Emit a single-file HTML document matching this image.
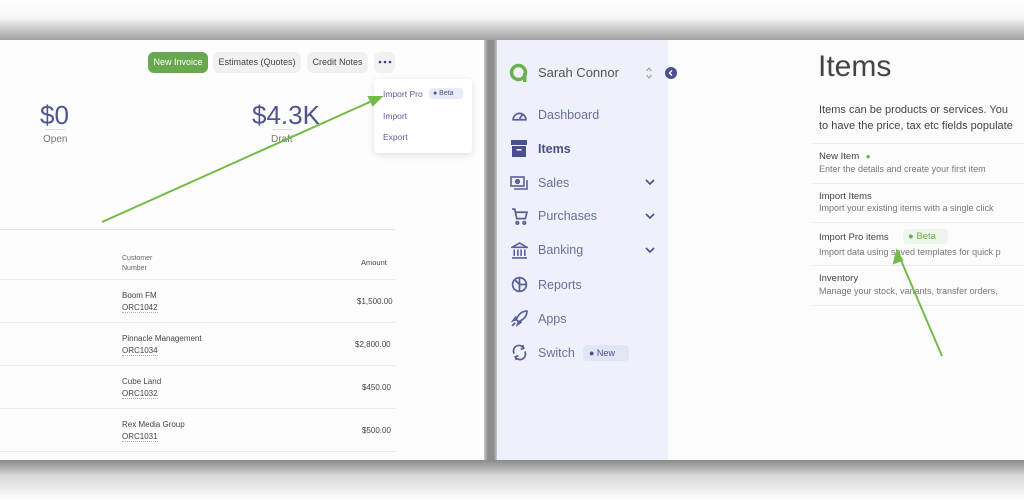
<!DOCTYPE html>
<html><head><meta charset="utf-8"><style>
*{box-sizing:border-box;margin:0;padding:0}
body{width:1024px;height:500px;overflow:hidden;background:#fff;font-family:"Liberation Sans",sans-serif;position:relative}
.a{position:absolute;white-space:nowrap}
.shadowtop{position:absolute;left:0;top:0;width:1024px;height:40px;background:linear-gradient(#fff 0,#f6f6f6 45%,#a0a0a0 100%)}
.shadowbot{position:absolute;left:0;top:460px;width:1024px;height:40px;background:linear-gradient(#8a8a8a 0,#d8d8d8 40%,#fff 100%)}
.gap{position:absolute;left:484px;top:40px;width:13px;height:420px;background:linear-gradient(90deg,#c8c8c8,#8d8d8d 30%,#8d8d8d 75%,#c8c8c8)}
.lp{position:absolute;left:0;top:40px;width:484px;height:420px;background:#fdfdfd}
.rp{position:absolute;left:497px;top:40px;width:527px;height:420px;background:#fcfcfc}
.sb{position:absolute;left:497px;top:40px;width:171px;height:420px;background:#eff1fa}
.btn{position:absolute;top:52px;height:21px;border-radius:6px;background:#f0f1f1;font-size:9px;color:#444;line-height:21px;text-align:center}
.nav{position:absolute;left:538px;font-size:12.5px;color:#6a6f9a}
.sm{font-size:8px;color:#444}
.line{position:absolute;height:1px;background:#ececec}
</style></head><body>
<div class="shadowtop"></div><div class="shadowbot"></div>
<div class="lp"></div><div class="gap"></div><div class="rp"></div><div class="sb"></div>

<!-- left panel -->
<div class="btn" style="left:148px;width:60px;background:#6aa84f;color:#fff">New Invoice</div>
<div class="btn" style="left:213px;width:88px">Estimates (Quotes)</div>
<div class="btn" style="left:307px;width:61px">Credit Notes</div>
<div class="btn" style="left:374px;width:21px"></div>
<svg class="a" style="left:378px;top:60px" width="14" height="4"><circle cx="2" cy="2" r="1.3" fill="#3e3f8a"/><circle cx="7" cy="2" r="1.3" fill="#3e3f8a"/><circle cx="12" cy="2" r="1.3" fill="#3e3f8a"/></svg>
<div class="a" style="left:374px;top:79px;width:98px;height:74px;background:#fff;border-radius:4px;box-shadow:0 2px 8px rgba(0,0,0,.12)"></div>
<div class="a" style="left:383px;top:89px;font-size:8.5px;color:#5a5e9e">Import Pro</div>
<div class="a" style="left:429px;top:88px;width:34px;height:11px;border-radius:3px;background:#e9ebf6;font-size:7px;color:#4a4e8e;line-height:11px;padding-left:4px">● Beta</div>
<div class="a" style="left:383px;top:111px;font-size:8.5px;color:#5a5e9e">Import</div>
<div class="a" style="left:383px;top:132px;font-size:8.5px;color:#5a5e9e">Export</div>
<div class="a" style="left:40px;top:100px;font-size:26px;color:#50558f">$0</div>
<div class="a" style="left:45px;top:129px;width:20px;height:1px;background:#ddd"></div>
<div class="a" style="left:43px;top:134px;font-size:10px;color:#777">Open</div>
<div class="a" style="left:252px;top:100px;font-size:26px;color:#50558f">$4.3K</div>
<div class="a" style="left:272px;top:129px;width:20px;height:1px;background:#ddd"></div>
<div class="a" style="left:271px;top:134px;font-size:10px;color:#777">Draft</div>
<div class="line" style="left:0;top:229px;width:395px;background:#e4e4e4"></div>
<div class="a sm" style="left:122px;top:254px;font-size:7px;color:#666;line-height:10px">Customer<br>Number</div>
<div class="a sm" style="left:361px;top:258px;font-size:7.5px">Amount</div>
<div class="line" style="left:0;top:279px;width:395px"></div>
<div class="a sm" style="left:122px;top:291px">Boom FM</div><div class="a sm" style="left:122px;top:303px;border-bottom:1px dotted #aaa">ORC1042</div><div class="a sm" style="left:357px;top:297px">$1,500.00</div>
<div class="line" style="left:0;top:322px;width:395px"></div>
<div class="a sm" style="left:122px;top:334px">Pinnacle Management</div><div class="a sm" style="left:122px;top:346px;border-bottom:1px dotted #aaa">ORC1034</div><div class="a sm" style="left:355px;top:340px">$2,800.00</div>
<div class="line" style="left:0;top:365px;width:395px"></div>
<div class="a sm" style="left:122px;top:377px">Cube Land</div><div class="a sm" style="left:122px;top:389px;border-bottom:1px dotted #aaa">ORC1032</div><div class="a sm" style="left:362px;top:383px">$450.00</div>
<div class="line" style="left:0;top:408px;width:395px"></div>
<div class="a sm" style="left:122px;top:420px">Rex Media Group</div><div class="a sm" style="left:122px;top:432px;border-bottom:1px dotted #aaa">ORC1031</div><div class="a sm" style="left:362px;top:426px">$500.00</div>
<div class="line" style="left:0;top:451px;width:395px"></div>

<!-- sidebar -->
<svg class="a" style="left:508px;top:62px" width="22" height="22" viewBox="0 0 22 22"><circle cx="10.5" cy="10.5" r="7" fill="none" stroke="#6ab04c" stroke-width="3.5"/><rect x="15" y="11" width="3.5" height="9" fill="#6ab04c"/></svg>
<div class="a" style="left:538px;top:65px;font-size:13px;color:#555">Sarah Connor</div>
<svg class="a" style="left:645px;top:66px" width="8" height="14" viewBox="0 0 8 14" fill="none" stroke="#999" stroke-width="1"><path d="M1.5 5l2.5-3 2.5 3M1.5 9l2.5 3 2.5-3"/></svg>
<div class="a" style="left:665px;top:67px;width:12px;height:12px;border-radius:50%;background:#4a4f8f"></div>
<svg class="a" style="left:665px;top:67px" width="12" height="12"><path d="M7 3.5L4.5 6 7 8.5" stroke="#fff" stroke-width="1.4" fill="none"/></svg>
<svg class="a" style="left:511px;top:107px" width="17" height="17" viewBox="0 0 16 16" fill="none" stroke="#5a5e9a" stroke-width="1.6"><path d="M2 12a6 6 0 1 1 12 0z"/><path d="M8 11l3-4"/></svg>
<div class="nav" style="top:108px">Dashboard</div>
<svg class="a" style="left:511px;top:140px" width="16" height="17" viewBox="0 0 16 17"><rect x="0" y="0" width="16" height="5" fill="#4a4f8f"/><rect x="1" y="6" width="14" height="11" fill="#4a4f8f"/><rect x="5.5" y="9" width="5" height="1.6" fill="#eff1fa"/></svg>
<div class="nav" style="top:142px;color:#4a4f8f;font-weight:bold">Items</div>
<svg class="a" style="left:510px;top:176px" width="18" height="15" viewBox="0 0 18 15" fill="none" stroke="#5a5e9a" stroke-width="1.6"><rect x="1" y="1" width="13" height="9"/><circle cx="7.5" cy="5.5" r="1.8" fill="#5a5e9a"/><path d="M4 13h13V4"/></svg>
<div class="nav" style="top:176px">Sales</div>
<svg class="a" style="left:511px;top:208px" width="17" height="17" viewBox="0 0 16 16" fill="none" stroke="#5a5e9a" stroke-width="1.6"><path d="M1 1h2.5l2 9h8l1.5-6H4.5"/><circle cx="6" cy="14" r="1.2"/><circle cx="12.5" cy="14" r="1.2"/></svg>
<div class="nav" style="top:209px">Purchases</div>
<svg class="a" style="left:511px;top:242px" width="17" height="17" viewBox="0 0 16 16" fill="none" stroke="#5a5e9a" stroke-width="1.5"><path d="M1 5l7-4 7 4zM3 7v6M6.5 7v6M9.5 7v6M13 7v6M1 15h14"/></svg>
<div class="nav" style="top:243px">Banking</div>
<svg class="a" style="left:511px;top:276px" width="17" height="17" viewBox="0 0 16 16" fill="none" stroke="#5a5e9a" stroke-width="1.6"><circle cx="8" cy="8" r="6.5"/><path d="M8 1.5v13M8 8h6.5M8 8l-4.5-4.5"/></svg>
<div class="nav" style="top:278px">Reports</div>
<svg class="a" style="left:511px;top:310px" width="17" height="17" viewBox="0 0 16 16" fill="none" stroke="#5a5e9a" stroke-width="1.6"><path d="M15 1c-5 0-8 3-10 8l2 2c5-2 8-5 8-10zM5 9l-3 1 3-4M7 11l-1 3 4-3M4 12l-3 3"/></svg>
<div class="nav" style="top:312px">Apps</div>
<svg class="a" style="left:511px;top:344px" width="17" height="17" viewBox="0 0 16 16" fill="none" stroke="#5a5e9a" stroke-width="1.6"><path d="M3 9a5 5 0 0 1 9-5M13 7a5 5 0 0 1-9 5M11 1l1 3-3 1M5 15l-1-3 3-1"/></svg>
<div class="nav" style="top:346px">Switch</div>
<div class="a" style="left:583px;top:345px;width:46px;height:16px;border-radius:4px;background:#e2e5f4;font-size:9px;color:#4a4f8f;line-height:16px;padding-left:6px">● New</div>
<svg class="a" style="left:644px;top:178px" width="12" height="8"><path d="M2 2l4 4 4-4" stroke="#4a4f8f" stroke-width="1.6" fill="none"/></svg>
<svg class="a" style="left:644px;top:212px" width="12" height="8"><path d="M2 2l4 4 4-4" stroke="#4a4f8f" stroke-width="1.6" fill="none"/></svg>
<svg class="a" style="left:644px;top:246px" width="12" height="8"><path d="M2 2l4 4 4-4" stroke="#4a4f8f" stroke-width="1.6" fill="none"/></svg>

<!-- right content -->
<div class="a" style="left:818px;top:50px;font-size:30px;color:#444">Items</div>
<div class="a" style="left:819px;top:102px;font-size:11px;color:#444;line-height:16px">Items can be products or services. You<br>to have the price, tax etc fields populate</div>
<div class="line" style="left:813px;top:143px;width:211px"></div>
<div class="a" style="left:819px;top:151px;font-size:9.5px;color:#444">New Item <span style="color:#6ab04c;font-size:8px;margin-left:4px">●</span></div>
<div class="a" style="left:819px;top:164px;font-size:9px;color:#777">Enter the details and create your first item</div>
<div class="line" style="left:813px;top:183px;width:211px"></div>
<div class="a" style="left:819px;top:191px;font-size:9.5px;color:#444">Import Items</div>
<div class="a" style="left:819px;top:203px;font-size:9px;color:#777">Import your existing items with a single click</div>
<div class="line" style="left:813px;top:222px;width:211px"></div>
<div class="a" style="left:819px;top:232px;font-size:9.5px;color:#444">Import Pro items</div>
<div class="a" style="left:903px;top:229px;width:45px;height:15px;border-radius:4px;background:#eef5ea;font-size:9.5px;color:#6ab04c;line-height:15px;padding-left:5px">● Beta</div>
<div class="a" style="left:819px;top:247px;font-size:9px;color:#777">Import data using saved templates for quick p</div>
<div class="line" style="left:813px;top:265px;width:211px"></div>
<div class="a" style="left:819px;top:273px;font-size:9.5px;color:#444">Inventory</div>
<div class="a" style="left:819px;top:286px;font-size:9px;color:#777">Manage your stock, variants, transfer orders, </div>
<div class="line" style="left:813px;top:305px;width:211px"></div>

<!-- arrows -->
<svg class="a" style="left:0;top:0" width="1024" height="500">
<g stroke="#72bb48" stroke-width="2" fill="#72bb48">
<line x1="102" y1="222" x2="372" y2="101"/><path d="M381 97l-12 0 4 8z"/>
<line x1="942" y1="356" x2="900" y2="258"/><path d="M897 251l-3 12 8-3z"/>
</g></svg>
</body></html>
